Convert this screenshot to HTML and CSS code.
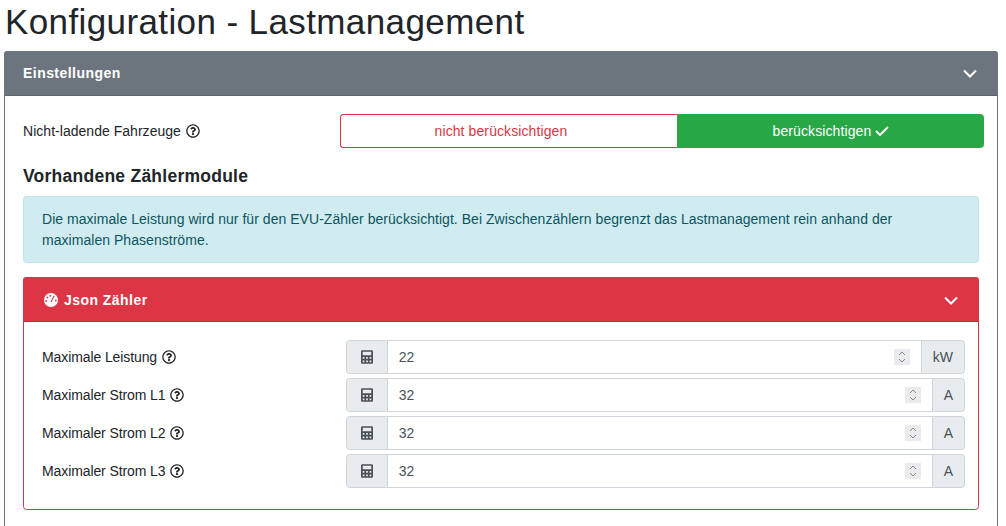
FILE: index.html
```html
<!DOCTYPE html>
<html lang="de">
<head>
<meta charset="utf-8">
<title>Konfiguration - Lastmanagement</title>
<link rel="stylesheet" href="styles.css">
</head>
<body>
<svg class="defs" aria-hidden="true">
  <symbol id="q" viewBox="0 0 512 512"><path d="M256 8C119.043 8 8 119.083 8 256c0 136.997 111.043 248 248 248s248-111.003 248-248C504 119.083 392.957 8 256 8zm0 448c-110.532 0-200-89.431-200-200 0-110.495 89.472-200 200-200 110.491 0 200 89.471 200 200 0 110.53-89.431 200-200 200zm107.244-255.2c0 67.052-72.421 68.084-72.421 92.863V300c0 6.627-5.373 12-12 12h-45.647c-6.627 0-12-5.373-12-12v-8.659c0-35.745 27.1-50.034 47.579-61.516 17.561-9.845 28.324-16.541 28.324-29.579 0-17.246-21.999-28.693-39.784-28.693-23.189 0-33.894 10.977-48.942 29.969-4.057 5.12-11.46 6.071-16.666 2.124l-27.824-21.098c-5.107-3.872-6.251-11.066-2.644-16.363C184.846 131.491 214.94 112 261.794 112c49.071 0 101.45 38.304 101.45 88.8zM298 368c0 23.159-18.841 42-42 42s-42-18.841-42-42 18.841-42 42-42 42 18.841 42 42z"/></symbol>
  <symbol id="calc" viewBox="0 0 448 512"><path fill-rule="evenodd" d="M48 0h352c26 0 48 22 48 48v416c0 26-22 48-48 48H48c-26 0-48-22-48-48V48C0 22 22 0 48 0zM64 64v128h320V64zM64 256v64h64v-64zM192 256v64h64v-64zM320 256v64h64v-64zM64 384v64h64v-64zM192 384v64h64v-64zM320 384v64h64v-64z"/></symbol>
</svg>
<h1 class="title">Konfiguration - Lastmanagement</h1>
<section class="card card-outer">
  <header class="card-head head-grey">
    <span class="head-title">Einstellungen</span>
    <svg class="chev" viewBox="0 0 14 9"><polyline points="1,1.5 7,7.5 13,1.5"/></svg>
  </header>
  <div class="card-body">
    <div class="row toggle-row">
      <div class="label label-wide">Nicht-ladende Fahrzeuge <svg class="help"><use href="#q"/></svg></div>
      <div class="toggle">
        <button class="btn btn-off">nicht berücksichtigen <svg class="check hidden" viewBox="0 0 14 10"><polyline points="1,5 5,9 13,1"/></svg></button>
        <button class="btn btn-on">berücksichtigen <svg class="check" viewBox="0 0 14 10"><polyline points="1,5 5,9 13,1"/></svg></button>
      </div>
    </div>
    <h2 class="section-title">Vorhandene Zählermodule</h2>
    <div class="alert">Die maximale Leistung wird nur für den EVU-Zähler berücksichtigt. Bei Zwischenzählern begrenzt das Lastmanagement rein anhand der maximalen Phasenströme.</div>
    <section class="card card-inner">
      <header class="card-head head-red">
        <span class="head-title"><svg class="gauge" viewBox="0 0 14 14"><path fill-rule="evenodd" d="M7 0a7 7 0 1 1 0 14A7 7 0 0 1 7 0zM6.3 1.9a.9.9 0 1 0 0 1.8.9.9 0 0 0 0-1.8zM3.4 3.5a.9.9 0 1 0 0 1.8.9.9 0 0 0 0-1.8zM2.2 7a.9.9 0 1 0 0 1.8.9.9 0 0 0 0-1.8zM11.8 6.6a.9.9 0 1 0 0 1.8.9.9 0 0 0 0-1.8zM9.8 2.6 6.5 8.8l1 .5 3.3-6.2z"/></svg>Json Zähler</span>
        <svg class="chev" viewBox="0 0 14 9"><polyline points="1,1.5 7,7.5 13,1.5"/></svg>
      </header>
      <div class="card-body inner-body">
        <div class="row field">
          <div class="label">Maximale Leistung <svg class="help"><use href="#q"/></svg></div>
          <div class="group">
            <span class="addon addon-icon"><svg class="calc"><use href="#calc"/></svg></span>
            <input class="num" type="number" value="22">
            <span class="addon addon-unit">kW</span>
          </div>
        </div>
        <div class="row field">
          <div class="label">Maximaler Strom L1 <svg class="help"><use href="#q"/></svg></div>
          <div class="group">
            <span class="addon addon-icon"><svg class="calc"><use href="#calc"/></svg></span>
            <input class="num" type="number" value="32">
            <span class="addon addon-unit">A</span>
          </div>
        </div>
        <div class="row field">
          <div class="label">Maximaler Strom L2 <svg class="help"><use href="#q"/></svg></div>
          <div class="group">
            <span class="addon addon-icon"><svg class="calc"><use href="#calc"/></svg></span>
            <input class="num" type="number" value="32">
            <span class="addon addon-unit">A</span>
          </div>
        </div>
        <div class="row field">
          <div class="label">Maximaler Strom L3 <svg class="help"><use href="#q"/></svg></div>
          <div class="group">
            <span class="addon addon-icon"><svg class="calc"><use href="#calc"/></svg></span>
            <input class="num" type="number" value="32">
            <span class="addon addon-unit">A</span>
          </div>
        </div>
      </div>
    </section>
  </div>
</section>
</body>
</html>
```
FILE: styles.css
```css
* { box-sizing: border-box; }
html, body { height: 526px; overflow: hidden; }
body {
  display: flex;
  flex-direction: column;
  margin: 0;
  padding: 0 8px 0 4px;
  font-family: "Liberation Sans", Arial, sans-serif;
  font-size: 14px;
  line-height: 21px;
  color: #212529;
  background: #fff;
}
.defs { display: none; }
.title {
  margin: 0 0 7px 1px;
  font-size: 35px;
  font-weight: 400;
  line-height: 44px;
  letter-spacing: .39px;
}
.card {
  border: 1px solid;
  border-radius: 3.5px;
  background: #fff;
}
.card-outer {
  flex: 1;
  min-height: 0;
  border-color: #6c757d;
  border-bottom: 0;
  border-radius: 3.5px 3.5px 0 0;
}
.card-inner { border-color: #dc3545; }
.card-head {
  display: flex;
  justify-content: space-between;
  align-items: center;
  height: 45px;
  margin: -1px -1px 0;
  padding: 0 21px 0 19px;
  border-radius: 3.5px 3.5px 0 0;
  color: #fff;
  font-weight: 700;
}
.head-grey { background: #6c757d; border-bottom: 1px solid #5f676e; }
.head-red { background: #dc3545; border-bottom: 1px solid #c22e3c; padding-top: 2px; }
.head-title { display: flex; align-items: center; letter-spacing: .45px; }
.chev { width: 14px; height: 9px; fill: none; stroke: #fff; stroke-width: 2; }
.gauge { width: 14px; height: 14px; margin: 0 6px 0 2px; fill: #fff; }
.card-body { padding: 18px; }
.row {
  display: grid;
  grid-template-columns: 1fr 2fr;
  margin: 0 -5px;
  align-items: center;
}
.label { padding-left: 5px; letter-spacing: -.1px; }
.label-wide { letter-spacing: .03px; }
.help { width: 14px; height: 14px; margin-left: 1px; vertical-align: -2px; fill: #212529; }
.toggle { display: flex; height: 34px; }
.btn {
  display: block;
  padding: 0;
  border: 1px solid;
  font: inherit;
  letter-spacing: .1px;
}
.btn-off {
  flex: 338 1 0;
  color: #dc3545;
  background: #fff;
  border-color: #dc3545;
  border-right: 0;
  border-radius: 3.5px 0 0 3.5px;
}
.btn-on {
  flex: 306 1 0;
  padding-left: 1px;
  color: #fff;
  background: #28a745;
  border-color: #28a745;
  border-radius: 0 3.5px 3.5px 0;
}
.check { width: 14px; height: 10px; fill: none; stroke: #fff; stroke-width: 1.9; }
.hidden { width: 12px; visibility: hidden; }
.section-title {
  margin: 18px 0 9px;
  font-size: 17.5px;
  font-weight: 700;
  line-height: 21px;
  letter-spacing: .25px;
}
.alert {
  margin-bottom: 14px;
  padding: 11.5px 18px;
  border: 1px solid #bee5eb;
  border-radius: 3.5px;
  color: #0c5460;
  background: #d1ecf1;
  letter-spacing: .04px;
}
.inner-body { padding-bottom: 21px; }
.field { margin-bottom: 4px; }
.field:last-child { margin-bottom: 0; }
.group { display: flex; height: 34px; }
.addon {
  display: flex;
  align-items: center;
  justify-content: center;
  border: 1px solid #ced4da;
  color: #495057;
  background: #e9ecef;
}
.addon-icon { width: 42px; border-radius: 3.5px 0 0 3.5px; }
.addon-unit { padding: 0 11px; margin-left: -1px; border-radius: 0 3.5px 3.5px 0; }
.calc { width: 12px; height: 14px; fill: #495057; }
.num {
  flex: 1;
  min-width: 0;
  margin-left: -1px;
  padding: 0 10.5px;
  border: 1px solid #ced4da;
  font: inherit;
  color: #495057;
  background: #fff;
}
.num::-webkit-inner-spin-button {
  -webkit-appearance: none;
  appearance: none;
  width: 16px;
  height: 16px;
  margin-top: 2px;
  opacity: 1;
  background: #e9ebee url("data:image/svg+xml,%3Csvg xmlns='http://www.w3.org/2000/svg' width='16' height='16' fill='none' stroke='%23888'%3E%3Cpath d='M5 6 8 3l3 3M5 10l3 3 3-3'/%3E%3C/svg%3E") center no-repeat;
}
```
